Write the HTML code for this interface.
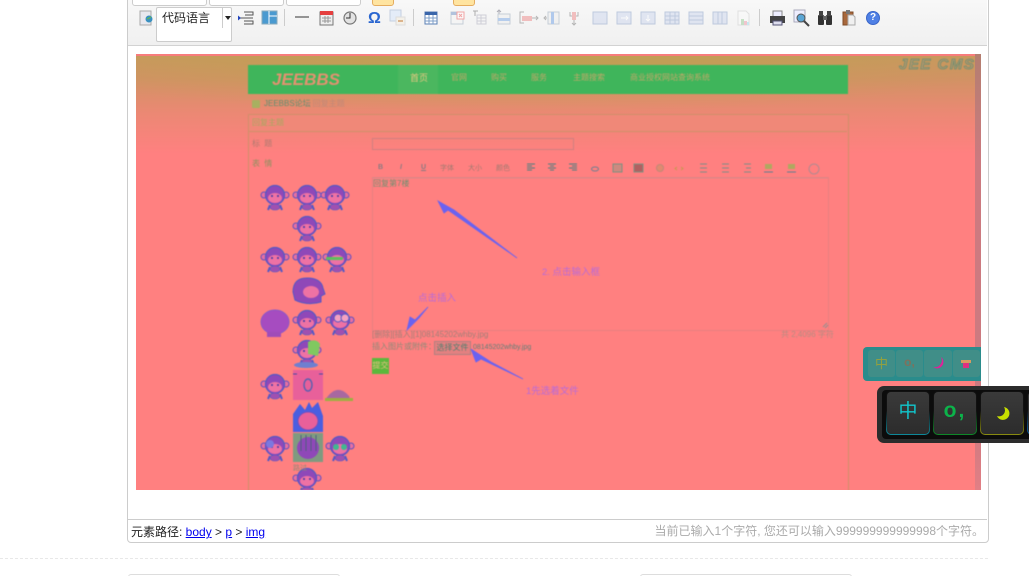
<!DOCTYPE html>
<html><head><meta charset="utf-8"><style>
html,body{margin:0;padding:0;background:#fff;width:1029px;height:576px;overflow:hidden;font-family:"Liberation Sans","Noto Sans CJK SC",sans-serif;}
#w{position:absolute;left:0;top:0;width:1029px;height:576px;overflow:hidden;}
.a{position:absolute;}
.t{position:absolute;white-space:nowrap;line-height:1;}
.sep{position:absolute;top:9px;width:1px;height:17px;background:#ccc;}
.tb{position:absolute;top:-20px;height:24px;background:#fff;border:1px solid #ccc;border-radius:3px;box-sizing:content-box;}
.yb{position:absolute;top:-10px;height:14px;background:#ffe4a0;border:1px solid #e5ad5f;border-radius:3px;}
.k{position:absolute;top:5px;width:44px;height:44px;box-sizing:border-box;border:1px solid transparent;border-radius:5px;}
.q{position:absolute;top:3px;height:27px;background:#408e88;border-radius:3px;}
a{color:#00e;}
</style></head><body><div id="w">
<!-- editor shell -->
<div class="a" style="left:127px;top:-6px;width:860px;height:547px;border:1px solid #ccc;border-radius:4px;background:#fff;"></div>
<!-- toolbar -->
<div class="a" style="left:128px;top:0;width:859px;height:45px;background:linear-gradient(#f8f8f8,#f0f0f0);border-bottom:1px solid #d2d2d2;overflow:hidden;">
<div class="tb" style="left:4px;width:73px;"></div><div class="tb" style="left:81px;width:73px;"></div><div class="tb" style="left:158px;width:73px;"></div>
<div class="yb" style="left:244px;width:20px;"></div><div class="yb" style="left:325px;width:20px;"></div>
<div class="a" style="left:28px;top:7px;width:74px;height:33px;background:#fff;border:1px solid #ccc;border-radius:2px;"></div>
<div class="t" style="left:34px;top:12px;font-size:12px;color:#222;">代码语言</div>
<div class="a" style="left:94px;top:8px;width:1px;height:20px;background:#ccc;"></div>
<div class="a" style="left:97px;top:16px;border-left:3px solid transparent;border-right:3px solid transparent;border-top:4px solid #222;"></div>
<div class="sep" style="left:156px;"></div><div class="sep" style="left:285px;"></div><div class="sep" style="left:631px;"></div>
<svg class="a" style="left:0;top:0" width="859" height="45" fill="none">
<rect x="12" y="11" width="11" height="14" fill="#e8e8ee" stroke="#aaa"/><circle cx="21" cy="19" r="3.5" fill="#3a90c0"/><path d="M19 19l4-2" stroke="#6b4"/>
<path d="M116 12h9v3h-8M116 21h9v3h-9M110 18h15" stroke="#555"/><path d="M110 15.500v5l3-2.500z" fill="#2244bb"/>
<rect x="134" y="11" width="15" height="13" fill="#4a9ad0" stroke="#8ab"/><path d="M141 11v13M141 16h8" stroke="#fff"/>
<path d="M167 17h14" stroke="#333"/>
<rect x="192" y="12" width="13" height="13" fill="#eee" stroke="#777"/><rect x="192" y="11" width="13" height="4" fill="#e54040"/><path d="M194 18h9M194 21h9M197 16v7M200 16v7" stroke="#999"/>
<circle cx="222" cy="18" r="6" fill="#e2e2e2" stroke="#777" stroke-width="1.200"/><path d="M222 13v5h-4" stroke="#333"/>
<rect x="262" y="10" width="11" height="11" fill="#e4ecf8" stroke="#c5cfe0"/><rect x="268" y="17" width="9" height="8" fill="#f4f0e8" stroke="#ddd"/><path d="M270 21h5" stroke="#dcb48c" stroke-width="2"/>
<rect x="297" y="12" width="12" height="12" fill="#fff" stroke="#5a7fb5"/><rect x="297" y="12" width="12" height="3" fill="#3a66aa"/><path d="M301 15v9M305 15v9M297 18h12M297 21h12" stroke="#7f9fc8"/>
<g opacity=".5">
<rect x="323" y="12" width="12" height="12" fill="#f4f4f4" stroke="#9ab"/><rect x="323" y="12" width="12" height="3" fill="#6f8fc5"/><rect x="329" y="12" width="7" height="7" fill="#fff" stroke="#e55"/><path d="M331 14l3 3m0-3l-3 3" stroke="#e55"/>
<path d="M345 11h5M347 11v5" stroke="#666"/><path d="M349 15h9v9h-9zM349 18h9M349 21h9M353 15v9" stroke="#aab"/>
<path d="M371 11v4M369 12l2-2 2 2" stroke="#667"/><rect x="370" y="14" width="12" height="10" fill="#eee" stroke="#9ab"/><rect x="370" y="18" width="12" height="3" fill="#7aa7e5"/>
<path d="M396 12h-4v11h4" stroke="#777"/><rect x="394" y="16" width="10" height="5" fill="#ee8888"/><path d="M404 18h6M408 16l2 2-2 2" stroke="#777"/>
<path d="M419 18h-2M418 16l-2 2 2 2" stroke="#777"/><rect x="420" y="12" width="11" height="12" fill="#eee" stroke="#9ab"/><rect x="423" y="12" width="3" height="12" fill="#6f9fe5"/>
<path d="M442 12v4h8v-4M446 20v5M444 23l2 2 2-2" stroke="#777"/><rect x="444" y="12" width="4" height="8" fill="#ee8888"/>
<g fill="#ccd6ee" stroke="#8aa0c8">
<rect x="465" y="12" width="14" height="12"/><rect x="489" y="12" width="14" height="12"/><rect x="513" y="12" width="14" height="12"/><rect x="537" y="12" width="14" height="12"/><rect x="561" y="12" width="14" height="12"/><rect x="585" y="12" width="14" height="12"/>
</g>
<path d="M493 18h7M498 16l2 2-2 2M520 15v6M518 19l2 2 2-2" stroke="#fff"/>
<path d="M537 16h14M537 20h14M542 12v12M547 12v12M561 16h14M561 20h14M590 12v12M594 12v12" stroke="#8aa0c8"/>
<path d="M610 11h8l3 3v11h-11z" fill="#fafafa" stroke="#ccc"/><rect x="613" y="19" width="3" height="6" fill="#9c9"/><rect x="616" y="21" width="3" height="4" fill="#e9a"/><rect x="619" y="22" width="2" height="3" fill="#9de"/>
</g>
<rect x="645" y="11" width="9" height="6" fill="#eef" stroke="#888"/><rect x="642" y="16" width="15" height="7" fill="#444"/><rect x="645" y="21" width="9" height="4" fill="#dde" stroke="#557"/>
<rect x="666" y="10" width="11" height="12" fill="#eef" stroke="#aab"/><circle cx="673" cy="18" r="4" fill="#5aa5d5" stroke="#555"/><path d="M676 21l5 5" stroke="#444" stroke-width="2"/>
<rect x="690" y="15" width="6" height="10" rx="1" fill="#333"/><rect x="698" y="15" width="6" height="10" rx="1" fill="#333"/><rect x="691" y="11" width="4" height="5" fill="#444"/><rect x="699" y="11" width="4" height="5" fill="#444"/><rect x="695" y="16" width="4" height="4" fill="#666"/>
<rect x="715" y="12" width="10" height="13" fill="#a8683c" stroke="#804c28"/><rect x="718" y="10" width="4" height="4" fill="#777"/><path d="M720 15h5l2 2v8h-7z" fill="#f0f0f0" stroke="#aaa"/>
<circle cx="745" cy="18" r="6.500" fill="#4f80e5" stroke="#3a66c8"/>
</svg>
<div class="t" style="left:240px;top:11px;font-size:16px;font-weight:bold;color:#2a66d0;">Ω</div>
<div class="t" style="left:742px;top:13px;font-size:10px;font-weight:bold;color:#fff;">?</div>
</div>

<!-- screenshot image -->
<div class="a" style="left:136px;top:54px;width:845px;height:436px;background:#ff8080;overflow:hidden;">
<div class="a" style="left:0;top:0;width:845px;height:100px;background:linear-gradient(#c8985e 0,#d29264 25%,#ec8874 60%,#ff8080 100%);"></div>
<div class="a" style="left:0;top:0;width:845px;height:60px;background:radial-gradient(ellipse 60% 100% at 45% 0,rgba(180,170,70,.55),rgba(180,170,70,0));"></div>
<div class="a" style="left:0;top:0;width:845px;height:2px;background:#f77c7c;"></div>
<div class="a" style="left:839px;top:0;width:6px;height:436px;background:linear-gradient(#b47e70,#cc7a80 25%,#cc7a80 85%,#e27f85);"></div>
<div class="a" style="left:0;top:0;width:845px;height:436px;filter:blur(.45px);">
<div class="a" style="left:112px;top:11px;width:600px;height:29px;background:#3fb55b;"></div>
<div class="a" style="left:262px;top:11px;width:40px;height:29px;background:#4bb75f;"></div>
<div class="t" style="left:136px;top:17px;font-size:17px;font-weight:bold;font-style:italic;color:#e29270;">JEEBBS</div>
<div class="t" style="left:274px;top:20px;font-size:9px;color:#e8c880;">首页</div>
<div class="t" style="left:315px;top:20px;font-size:8px;color:#c0a868;">官网</div>
<div class="t" style="left:355px;top:20px;font-size:8px;color:#c0a868;">购买</div>
<div class="t" style="left:395px;top:20px;font-size:8px;color:#c0a868;">服务</div>
<div class="t" style="left:437px;top:20px;font-size:8px;color:#c0a868;">主题搜索</div>
<div class="t" style="left:494px;top:20px;font-size:8px;color:#c0a868;">商业授权网站查询系统</div>
<div class="t" style="left:763px;top:3px;font-size:15px;font-weight:bold;font-style:italic;color:#b8966c;-webkit-text-stroke:.8px #6f8f70;letter-spacing:1.500px;">JEE CMS</div>
<div class="a" style="left:116px;top:46px;width:8px;height:8px;background:#a8b060;border-radius:1px;"></div>
<div class="t" style="left:128px;top:46px;font-size:8px;color:#5f8f70;">JEEBBS论坛</div>
<div class="t" style="left:170px;top:46px;font-size:8px;color:#c08878;">» 回复主题</div>
<div class="a" style="left:112px;top:60px;width:599px;height:400px;border:1px solid #d0906a;"></div>
<div class="a" style="left:113px;top:61px;width:598px;height:16px;background:#f08878;border-bottom:1px solid #d0906a;"></div>
<div class="t" style="left:116px;top:65px;font-size:8px;color:#a8a860;">回复主题</div>
<div class="t" style="left:116px;top:86px;font-size:8px;letter-spacing:1px;color:#b07a70;">标 题</div>
<div class="t" style="left:116px;top:106px;font-size:8px;letter-spacing:1px;color:#909060;">表 情</div>
<div class="a" style="left:236px;top:84px;width:200px;height:10px;border:1px solid #d08080;"></div>
<div class="t" style="left:242px;top:110px;font-size:7px;font-weight:bold;color:#8a7a80;">B</div>
<div class="t" style="left:264px;top:110px;font-size:7px;font-weight:bold;font-style:italic;color:#8a7a80;">I</div>
<div class="t" style="left:285px;top:110px;font-size:7px;font-weight:bold;text-decoration:underline;color:#8a7a80;">U</div>
<div class="t" style="left:304px;top:111px;font-size:7px;color:#a07a70;">字体</div>
<div class="t" style="left:332px;top:111px;font-size:7px;color:#a07a70;">大小</div>
<div class="t" style="left:360px;top:111px;font-size:7px;color:#a07a70;">颜色</div>
<svg class="a" style="left:0;top:0" width="845" height="436" fill="none">
<g stroke="#4f7f80"><path d="M391 110h8M391 112h5M391 114h8M391 116h5M412 110h8M414 112h4M412 114h8M414 116h4M433 110h8M436 112h5M433 114h8M436 116h5"/></g>
<ellipse cx="459" cy="115" rx="3.500" ry="2" stroke="#6f7f90"/><rect x="477" y="110" width="9" height="8" fill="#cc8a80" stroke="#7f8f80"/><rect x="498" y="110" width="9" height="8" fill="#b06060" stroke="#7f8f80"/>
<circle cx="524" cy="114" r="3.500" fill="#e08a70" stroke="#c08878"/><path d="M541 113l-2 1.500 2 1.500M545 113l2 1.500-2 1.500" stroke="#c89850"/>
<path d="M564 110h7M564 114h7M564 118h7M586 110h7M586 114h7M586 118h7M608 110h7M610 114h5M608 118h7" stroke="#7f8f88"/>
<rect x="629" y="110" width="7" height="5" fill="#b0a860"/><path d="M628 118h9" stroke="#5f7f90"/><rect x="652" y="110" width="7" height="5" fill="#b0a860"/><path d="M651 118h9" stroke="#5f7f90"/>
<circle cx="678" cy="115" r="5" stroke="#b08a90"/>
<rect x="236.500" y="123.500" width="456" height="153" stroke="#e88080"/><path d="M236 124h456" stroke="#d88888"/>
<path d="M687 273l4-4M689 274l3-3" stroke="#909090"/>
<g fill="#6a62f0" stroke="#6a62f0">
<path d="M381 204L318 156l-16-9 6 12 4-3z" stroke-width=".8"/>
<path d="M292 253l-9 11-12 12 3-13 5 3z" stroke-width=".8"/>
<path d="M387 325l-32-17-20-13 5 13 5-3z" stroke-width=".8"/>
</g>
<defs>
<g id="m">
<circle cx="-11" cy="-2" r="3" fill="#e870a0" stroke="#5f50c0"/><circle cx="11" cy="-2" r="3" fill="#e870a0" stroke="#5f50c0"/>
<circle r="9.500" cy="-2" fill="#8f48b8" stroke="#5458c4" stroke-width="1.200"/>
<ellipse cy="1" rx="7" ry="5" fill="#ee72a4"/>
<path d="M-5 8l-2 5M5 8l2 5" stroke="#5458c4" stroke-width="2"/>
<ellipse cy="10" rx="5" ry="3" fill="#a050b0" stroke="#5458c4" stroke-width=".6"/>
<circle cx="-3" cy="-1" r="1" fill="#3838a8"/><circle cx="3" cy="-1" r="1" fill="#3838a8"/>
</g>
</defs>
<use href="#m" x="139" y="143"/><use href="#m" x="171" y="143"/><use href="#m" x="199" y="143"/>
<use href="#m" x="171" y="174"/>
<use href="#m" x="139" y="205"/><use href="#m" x="171" y="205"/><use href="#m" x="201" y="205"/>
<rect x="190" y="203" width="17" height="3" rx="1" fill="#5cc05c"/>
<path d="M157 238q0-14 14-14q14 0 16 10l2 6-4 2v6q-14 4-26-2z" fill="#8f48b8" stroke="#5458c4"/><ellipse cx="175" cy="238" rx="8" ry="6" fill="#ee72a4"/>
<ellipse cx="139" cy="268" rx="14" ry="12" fill="#a64cc0" stroke="#8a58c8"/><rect x="131" y="278" width="14" height="5" fill="#a04cb8"/>
<use href="#m" x="171" y="268"/><use href="#m" x="204" y="268"/>
<circle cx="202" cy="264" r="4" fill="#f4a0c0" stroke="#5458c4"/><circle cx="209" cy="264" r="4" fill="#f4a0c0" stroke="#5458c4"/>
<use href="#m" x="171" y="298"/><path d="M172 288q8-4 12 2l-2 12-10-2z" fill="#80c860"/><ellipse cx="170" cy="311" rx="12" ry="3" fill="#6f7fd0"/>
<use href="#m" x="139" y="332"/>
<rect x="157" y="316" width="30" height="30" fill="#e8609a"/><ellipse cx="172" cy="331" rx="4" ry="6" stroke="#5a60b0" stroke-width="1.500"/>
<path d="M157 320h4M183 320h4" stroke="#4a4aa0"/>
<path d="M189 346q12-18 24-4l2 5h-26z" fill="#a868a0"/><rect x="189" y="344" width="28" height="3" fill="#9cb040"/>
<path d="M157 378v-18l7-10 5 6 4-8 3 6 6-6 5 14v16z" fill="#4a5ee0"/><ellipse cx="172" cy="367" rx="10" ry="9" fill="#e8609a" stroke="#7050c0"/>
<use href="#m" x="139" y="394"/><circle cx="134" cy="390" r="4" fill="#7c78e0"/>
<rect x="157" y="379" width="30" height="29" fill="#7f9a80"/><circle cx="172" cy="394" r="11" fill="#8f48b8"/><path d="M165 381v16M170 381v16M175 381v16M180 381v16" stroke="#4f5f80"/>
<use href="#m" x="204" y="394"/><circle cx="200" cy="393" r="3" fill="#40b890"/><circle cx="208" cy="393" r="3" fill="#40b890"/>
<use href="#m" x="171" y="426"/>
</svg>
<div class="t" style="left:237px;top:126px;font-size:8px;color:#6f8f70;">回复第7楼</div>
<div class="t" style="left:406px;top:214px;font-size:9.500px;color:#b86ad8;">2. 点击输入框</div>
<div class="t" style="left:282px;top:240px;font-size:9.500px;color:#b86ad8;">点击插入</div>
<div class="t" style="left:236px;top:277px;font-size:8px;color:#a07f78;">[删除][插入][1]08145202whby.jpg</div>
<div class="t" style="left:645px;top:277px;font-size:8px;color:#b88a80;">共 2,4096 字符</div>
<div class="t" style="left:236px;top:289px;font-size:8px;color:#8f8a78;">插入图片或附件：</div>
<div class="a" style="left:298px;top:287px;width:35px;height:12px;background:#e38080;border:1px solid #b08080;font-size:8px;line-height:12px;text-align:center;color:#4f7f70;">选择文件</div>
<div class="t" style="left:337px;top:290px;font-size:7px;color:#5f7f78;">08145202whby.jpg</div>
<div class="a" style="left:236px;top:304px;width:17px;height:16px;background:#5cb83c;font-size:8px;line-height:16px;text-align:center;color:#e8c080;">提交</div>
<div class="t" style="left:390px;top:333px;font-size:9.500px;color:#b86ad8;">1先选着文件</div>
<div class="t" style="left:157px;top:411px;font-size:7px;color:#8f8a78;">路过</div>
</div>
<!-- teal IME -->
<div class="a" style="left:727px;top:293px;width:118px;height:34px;background:#2a8c8c;border-radius:4px 0 0 4px;">
<div class="q" style="left:5px;width:27px;font-size:13px;line-height:27px;text-align:center;color:#92a040;">中</div>
<div class="q" style="left:33px;width:27px;font-size:12px;font-weight:bold;line-height:25px;text-align:center;color:#80705c;">o,</div>
<div class="q" style="left:61px;width:28px;"><svg width="28" height="27" class="a" style="left:0;top:0"><path d="M17 7A6 6 0 1 1 9 17A7 7 0 0 0 17 7z" fill="#e0209a"/></svg></div>
<div class="q" style="left:90px;width:27px;"><div class="a" style="left:8px;top:10px;width:10px;height:3px;background:#d89a60;"></div><div class="a" style="left:10px;top:13px;width:6px;height:5px;background:#e03080;"></div></div>
</div>
</div>
<!-- dark IME -->
<div class="a" style="left:877px;top:386px;width:152px;height:57px;background:#2c2c2c;border-radius:7px 0 0 7px;overflow:hidden;">
<div class="a" style="left:5px;top:4px;width:147px;height:49px;background:#0c0c0c;border-radius:4px 0 0 4px;"></div>
<div class="k" style="left:9px;background:linear-gradient(#3a3a3a,#2c2c2c) padding-box,linear-gradient(#111 45%,#0e8a9c) border-box;font-size:19px;line-height:40px;text-align:center;color:#11c5cc;">中</div>
<div class="k" style="left:56px;background:linear-gradient(#3a3a3a,#2c2c2c) padding-box,linear-gradient(#111 45%,#0e8a28) border-box;font-size:21px;line-height:38px;text-align:center;font-weight:bold;letter-spacing:2px;color:#0cb34a;">o,</div>
<div class="k" style="left:103px;background:linear-gradient(#3a3a3a,#2c2c2c) padding-box,linear-gradient(#111 45%,#8a8c10) border-box;"><svg class="a" style="left:-1px;top:-1px" width="44" height="44"><path d="M24 16A6.500 6.500 0 1 1 17 25A6 6 0 0 0 24 16z" fill="#c8e000"/></svg></div>
<div class="k" style="left:150px;background:linear-gradient(#3a3a3a,#2c2c2c) padding-box,linear-gradient(#111 45%,#0e6ab0) border-box;"></div>
</div>
<!-- status bar -->
<div class="a" style="left:128px;top:519px;width:859px;height:1px;background:#ccc;"></div>
<div class="t" style="left:131px;top:526px;font-size:12px;color:#222;">元素路径: <a href="#">body</a> &gt; <a href="#">p</a> &gt; <a href="#">img</a></div>
<div class="t" style="right:45px;top:525px;font-size:12px;color:#aaa;">当前已输入1个字符, 您还可以输入999999999999998个字符。</div>
<!-- below -->
<div class="a" style="left:0;top:558px;width:988px;height:0;border-top:1px dashed #e8e8e8;"></div>
<div class="a" style="left:128px;top:574px;width:210px;height:10px;border:1px solid #ddd;border-radius:3px;"></div>
<div class="a" style="left:640px;top:574px;width:210px;height:10px;border:1px solid #ddd;border-radius:3px;"></div>
</div></body></html>
